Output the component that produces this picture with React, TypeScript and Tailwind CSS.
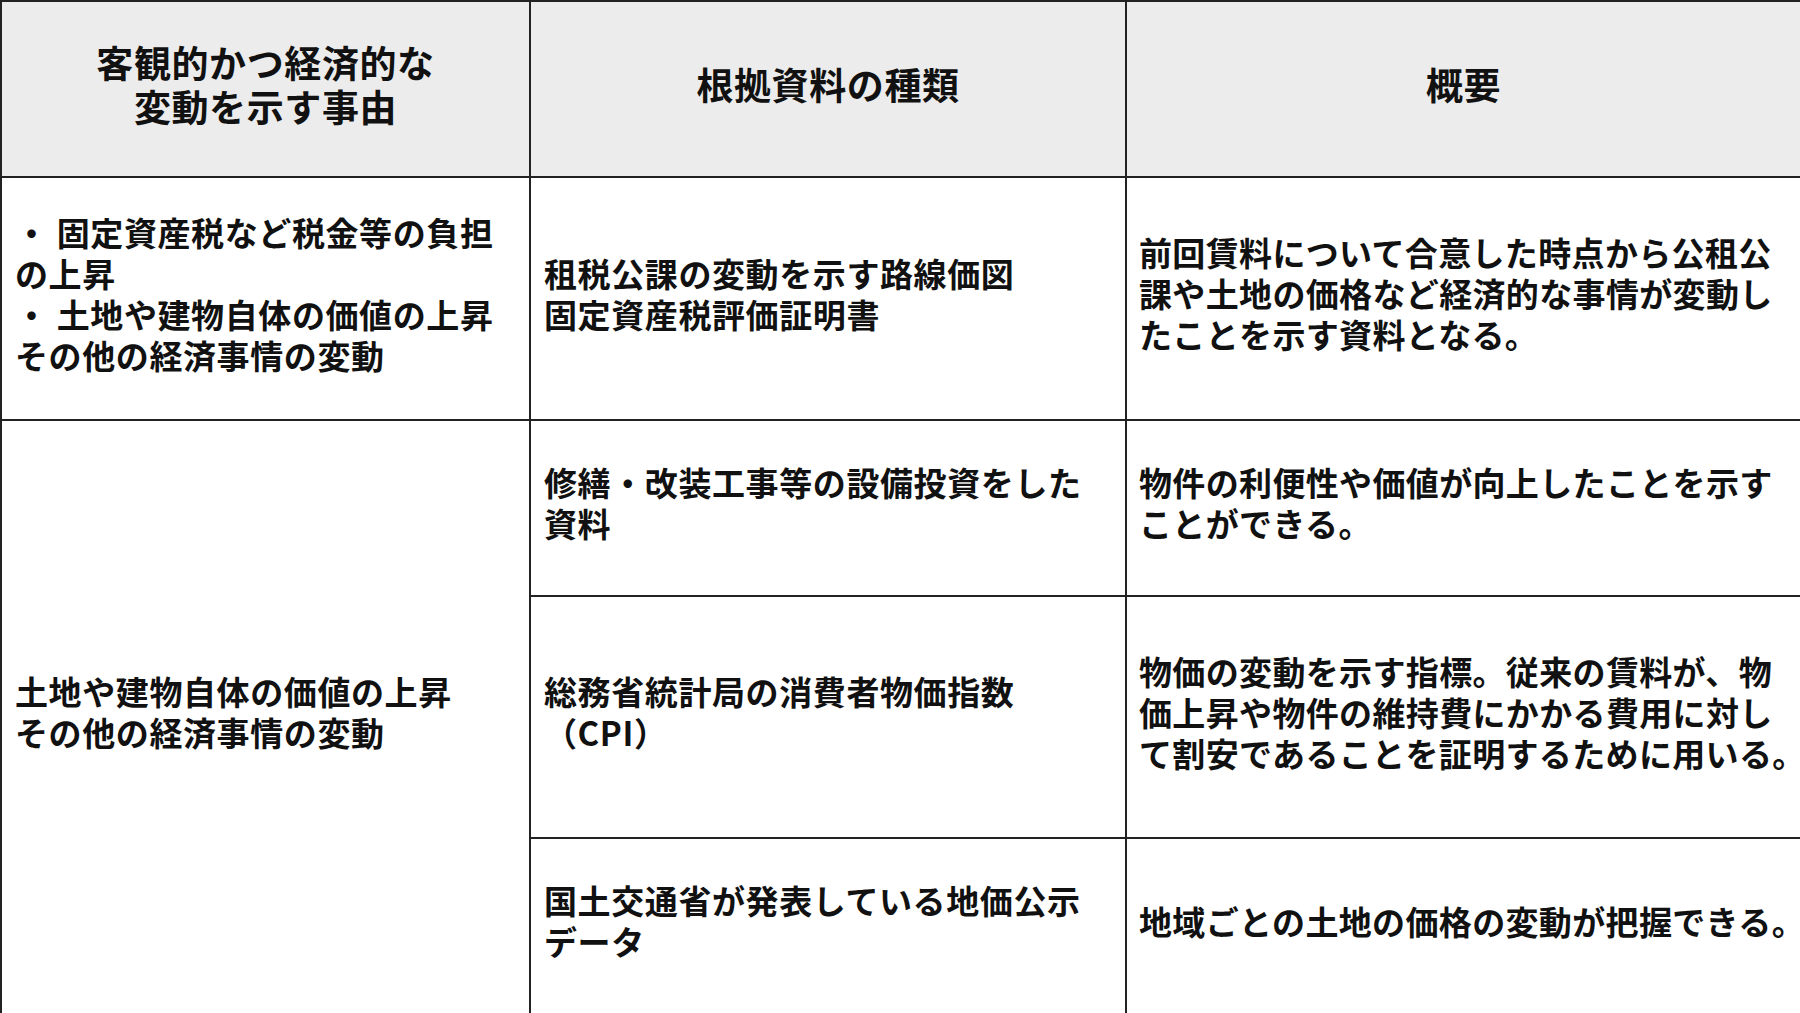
import React from "react";

const font = { fontFamily: '"Noto Sans CJK JP", "Noto Sans", sans-serif' };

// one body cell, lines broken by hand as in the source table
const Cell = ({ lines, className = "" }: { lines: string[]; className?: string }) => (
  <div className={`flex flex-col justify-center border-r-2 border-b-2 border-[#222] pb-[10px] text-[33px] leading-[41px] font-bold text-[#111] whitespace-nowrap ${className}`}>
    {lines.map((l, i) => (
      <div key={i}>{l}</div>
    ))}
  </div>
);

const Head = ({ lines }: { lines: string[] }) => (
  <div className="flex flex-col items-center justify-center border-r-2 border-b-2 border-[#222] bg-[#ececec] pb-[10px] text-[37px] tracking-[0.6px] leading-[44px] font-bold text-[#111]">
    {lines.map((l, i) => (
      <div key={i}>{l}</div>
    ))}
  </div>
);

const left = "pl-[13px] tracking-[0.6px]";
const right = "pl-[12px] tracking-[0.35px]";

export default function App() {
  return (
    <div style={font} className="w-[1800px] h-[1013px] bg-white overflow-hidden">
      <div className="grid grid-cols-[529px_596px_675px] grid-rows-[176px_243px_176px_242px_176px] w-[1800px] h-[1013px] border-t-2 border-l-2 border-[#222]">
        <Head lines={["客観的かつ経済的な", "変動を示す事由"]} />
        <Head lines={["根拠資料の種類"]} />
        <Head lines={["概要"]} />

        <Cell className={left} lines={["・ 固定資産税など税金等の負担", "の上昇", "・ 土地や建物自体の価値の上昇", "その他の経済事情の変動"]} />
        <Cell className={left} lines={["租税公課の変動を示す路線価図", "固定資産税評価証明書"]} />
        <Cell className={right} lines={["前回賃料について合意した時点から公租公", "課や土地の価格など経済的な事情が変動し", "たことを示す資料となる。"]} />

        <Cell className={`row-span-3 ${left}`} lines={["土地や建物自体の価値の上昇", "その他の経済事情の変動"]} />
        <Cell className={left} lines={["修繕・改装工事等の設備投資をした", "資料"]} />
        <Cell className={right} lines={["物件の利便性や価値が向上したことを示す", "ことができる。"]} />

        <Cell className={left} lines={["総務省統計局の消費者物価指数", "（CPI）"]} />
        <Cell className={right} lines={["物価の変動を示す指標。従来の賃料が、物", "価上昇や物件の維持費にかかる費用に対し", "て割安であることを証明するために用いる。"]} />

        <Cell className={left} lines={["国土交通省が発表している地価公示", "データ"]} />
        <Cell className={right} lines={["地域ごとの土地の価格の変動が把握できる。"]} />
      </div>
    </div>
  );
}
